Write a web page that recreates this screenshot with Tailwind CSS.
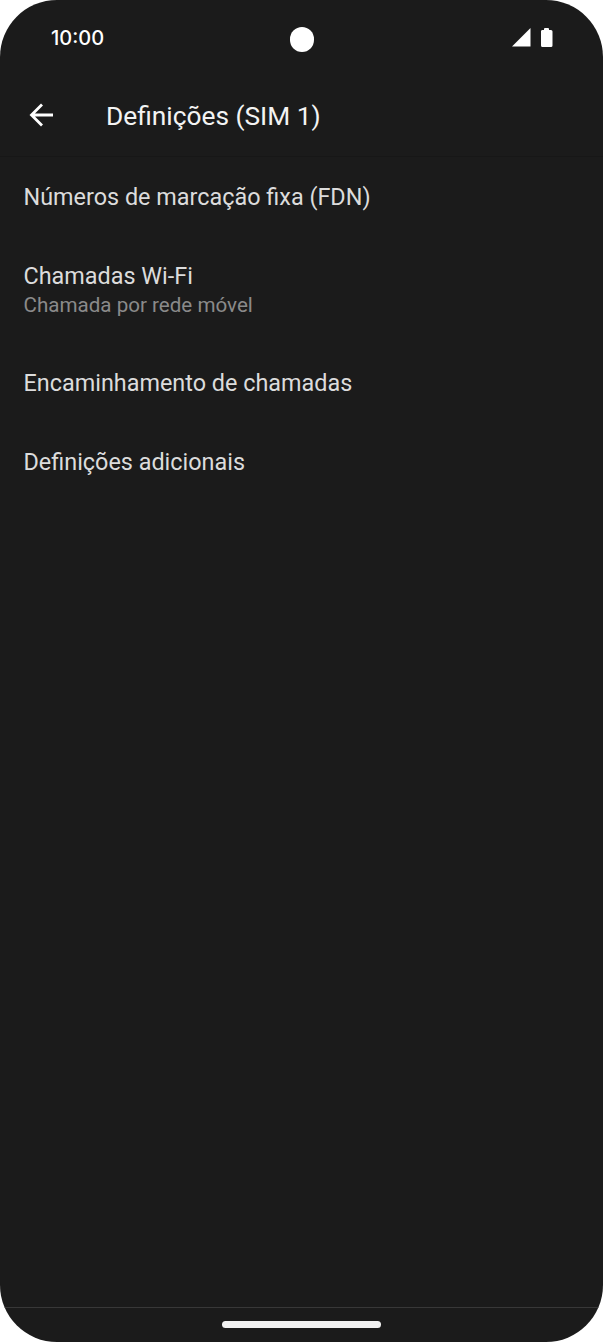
<!DOCTYPE html>
<html lang="pt"><head><meta charset="utf-8"><script src="https://cdn.jsdelivr.net/npm/@tailwindcss/browser@4"></script></head>
<body class="bg-white">
<div class="w-[603px] h-[1342px] bg-[#1b1b1b] rounded-[57px] overflow-hidden flex flex-col font-['Roboto',sans-serif]">
<header class="h-[76px] shrink-0 flex justify-between pl-[51px] pr-[50px] relative">
<span class="mt-[26px] text-[20px] leading-6 font-medium text-white font-['Inter',sans-serif]">10:00</span>
<span class="absolute left-[289.500px] top-[27px] size-[24.500px] rounded-full bg-white"></span>
<svg class="mt-[26px]" width="42" height="22" viewBox="0 0 42 22" fill="#fff"><path d="M1 20.500L19.500 2V20.500Z"/><path d="M31 4H33V3Q33 2 34 2H37Q38 2 38 3V4H40Q41.500 4 41.500 5.500V19.500Q41.500 21 40 21H31.500Q30 21 30 19.500V5.500Q30 4 31 4Z"/></svg>
</header>
<div class="h-[81px] shrink-0 border-b border-[#171717] flex items-center pl-[29px] gap-[53px]">
<svg class="-mt-[3px]" width="24" height="24" viewBox="0 0 24 24" fill="none" stroke="#fff" stroke-width="2.800"><path d="M24 12H2.500M13 1.500L2.500 12L13 22.500"/></svg>
<h1 class="text-[26.300px] leading-8 text-[#f3f3f3] whitespace-nowrap">Definições (SIM 1)</h1></div>
<main class="flex-1 pl-[23.500px] text-[23.400px] leading-7 text-[#dcdcdc]">
<p class="pt-[26px]">Números de marcação fixa (FDN)</p>
<p class="pt-[51px]">Chamadas Wi-Fi</p>
<p class="pt-px text-[20.600px] text-[#8a8a8a]">Chamada por rede móvel</p>
<p class="pt-[50px]">Encaminhamento de chamadas</p>
<p class="pt-[51px]">Definições adicionais</p>
</main>
<footer class="h-[35px] shrink-0 border-t border-[#383838] flex justify-center pt-[13px]"><span class="w-[159px] h-[6.500px] rounded-full bg-[#f1f1f1]"></span></footer>
</div></body></html>
